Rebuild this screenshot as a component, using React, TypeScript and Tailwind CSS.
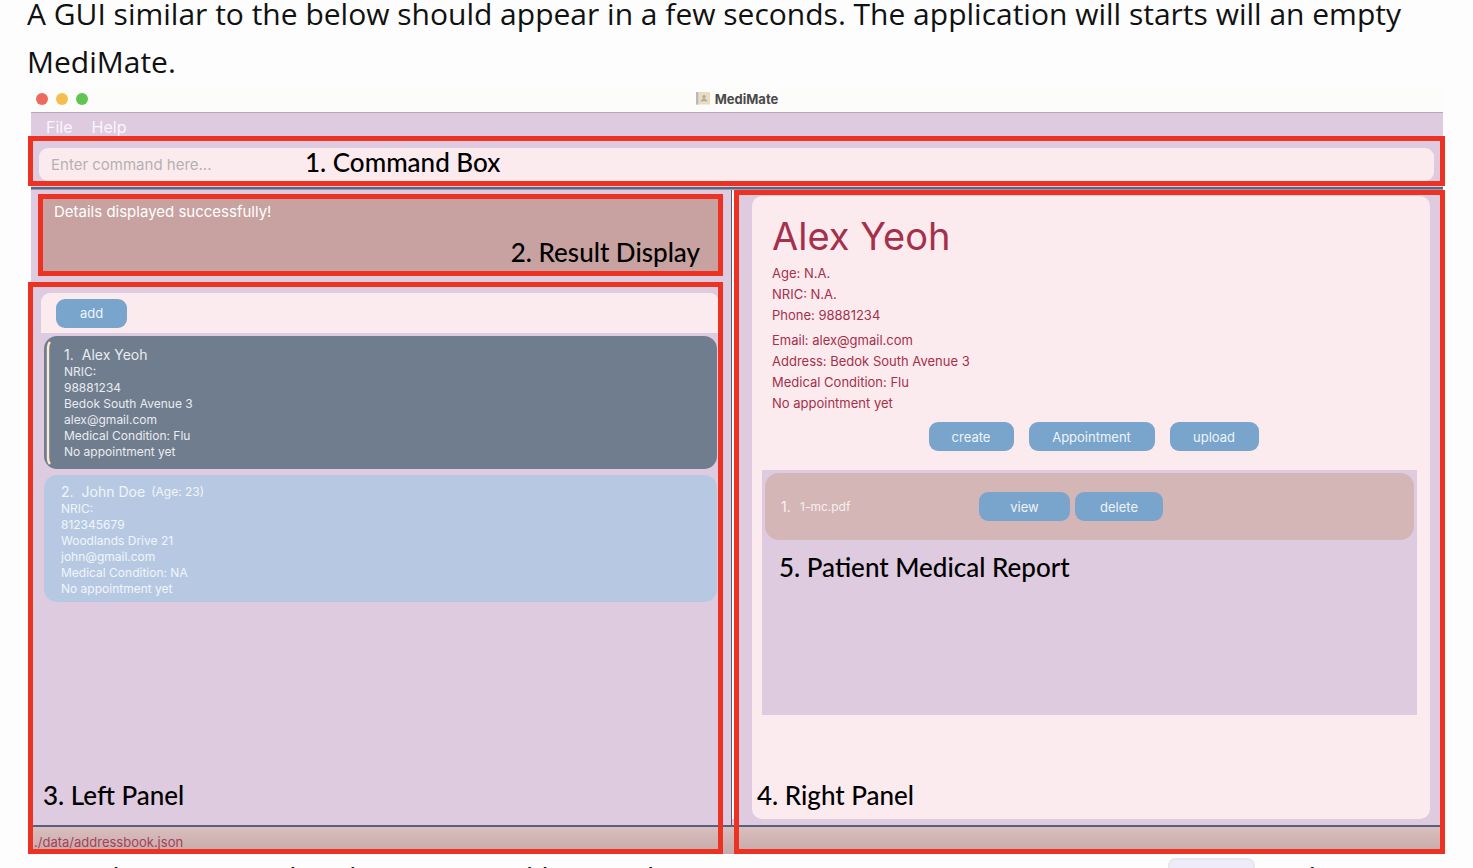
import React from "react";

type Patient = {
  index: number;
  name: string;
  age?: string;
  lines: string[];
  selected?: boolean;
};

const patients: Patient[] = [
  {
    index: 1,
    name: "Alex Yeoh",
    selected: true,
    lines: ["NRIC:", "98881234", "Bedok South Avenue 3", "alex@gmail.com", "Medical Condition: Flu", "No appointment yet"],
  },
  {
    index: 2,
    name: "John Doe",
    age: "(Age: 23)",
    lines: ["NRIC:", "812345679", "Woodlands Drive 21", "john@gmail.com", "Medical Condition: NA", "No appointment yet"],
  },
];

function Label({ children }: { children: React.ReactNode }) {
  return (
    <span className="block font-[Lato,sans-serif] text-[26px] leading-8 font-medium whitespace-nowrap text-black">
      {children}
    </span>
  );
}

function ActionButton({ children, width }: { children: React.ReactNode; width: string }) {
  return (
    <button
      type="button"
      className={`h-[29px] shrink-0 rounded-[9px] bg-[#79a5cc] text-center text-[13px] leading-5 text-[#eef3f8] ${width}`}
    >
      {children}
    </button>
  );
}

function AppIcon() {
  return (
    <svg width="14" height="13" viewBox="0 0 14 13" aria-hidden="true">
      <rect x="0" y="0" width="14" height="12.5" rx="0.6" fill="#e9dcc0" />
      <rect x="0" y="0" width="2.2" height="12.5" fill="#b9b9bb" />
      <rect x="2.2" y="0" width="0.7" height="12.5" fill="#d8d2c4" />
      <circle cx="8" cy="4.6" r="1.7" fill="#b3ab9c" />
      <path d="M7.3 5.5h1.4v1.6l2.5 1v1.2H4.8V8.100l2.500-1z" fill="#b3ab9c" />
    </svg>
  );
}

function PatientCard({ patient }: { patient: Patient }) {
  return (
    <li
      className={
        patient.selected
          ? "relative h-[133px] rounded-[13px] bg-[#707d8f] pt-[10px] pl-5 text-[#e9ecef]"
          : "relative h-[127px] rounded-[13px] bg-[#b7c9e2] pt-2 pl-[17px] text-[#f1f5fa]"
      }
    >
      {patient.selected && (
        <svg className="absolute top-[5px] left-[2px]" width="5" height="124" viewBox="0 0 5 124" aria-hidden="true">
          <path d="M4 1Q2 3 2 8V116Q2 121 4 123" fill="none" stroke="#fbe8cf" strokeWidth="2.4" />
        </svg>
      )}
      <h3 className="flex items-center text-[14px] leading-[18px]">
        <span className="mr-2">{patient.index}.</span>
        <span>{patient.name}</span>
        {patient.age && <span className="ml-[6px] text-[12px]">{patient.age}</span>}
      </h3>
      {patient.lines.map((line) => (
        <p key={line} className="text-[12px] leading-4">
          {line}
        </p>
      ))}
    </li>
  );
}

export default function App() {
  return (
    <main className="h-screen overflow-hidden bg-[#fdfdfd] font-[Inter,sans-serif]">
      <p className="-mt-[10px] px-[27px] pb-px font-['Open_Sans','Noto_Sans',sans-serif] text-[30px] leading-[48px] text-[#111]">
        A GUI similar to the below should appear in a few seconds. The application will starts will an empty
        MediMate.
      </p>

      <section aria-label="MediMate window" className="mr-[30px] ml-[31px] bg-[#decbdf]">
        <header className="flex h-[26px] items-center border-b border-[#b7a6ba] bg-[#fcfcfa] px-[5px] pb-[2px]">
          <div className="flex flex-1 gap-2">
            <span className="size-3 rounded-full bg-[#ec6a5e]" />
            <span className="size-3 rounded-full bg-[#f4bf4f]" />
            <span className="size-3 rounded-full bg-[#61c554]" />
          </div>
          <h1 className="flex items-center gap-[5px] text-[13px] leading-4 font-bold text-[#4a4a4a]">
            <AppIcon />
            MediMate
          </h1>
          <div className="flex-1" />
        </header>

        <nav className="flex h-[23px] gap-[19px] pt-1 pl-[15px] text-[16px] leading-5 text-[#faf6fa]">
          <button type="button">File</button>
          <button type="button">Help</button>
        </nav>

        <div className="relative -mr-[2px] -ml-[3px] border-[5px] border-[#ec3323] bg-[#decbdf] px-[6px] pt-[7px]">
          <input
            aria-label="Command"
            placeholder="Enter command here..."
            className="block h-[33px] w-full rounded-[9px] bg-[#fcebee] px-3 text-[15px] placeholder:text-[#b5b1b3] focus:outline-none"
          />
          <div className="pointer-events-none absolute top-[5px] left-[272px]">
            <Label>1. Command Box</Label>
          </div>
        </div>
        <div className="mt-px h-[3px] border-b border-[#9a97b3] bg-[#5b6480]" />

        <div className="relative">
          <div className="grid grid-cols-[700fr_712fr]">
            <div className="px-[7px] pt-[4px]">
              <div className="mr-[1px] flex h-[82px] justify-between border-[5px] border-[#ec3323] bg-[#c8a2a0] pr-[18px] pl-[11px]">
                <p className="pt-[3px] text-[15px] leading-5 text-white">Details displayed successfully!</p>
                <div className="self-end pb-[3px]">
                  <Label>2. Result Display</Label>
                </div>
              </div>
              <div className="mt-[17px] mr-[5px] ml-[3px] flex h-10 items-center rounded-t-[9px] bg-[#fcebee] pl-[15px]">
                <ActionButton width="w-[71px]">add</ActionButton>
              </div>
              <ul className="mt-[3px] mr-[7px] ml-[6px] flex flex-col gap-[6px]">
                {patients.map((p) => (
                  <PatientCard key={p.index} patient={p} />
                ))}
              </ul>
            </div>

            <div className="border-l border-[#5f5d6b] pr-[13px] pb-[6px]">
              <div className="flex h-full border-l-2 border-white">
                <article className="mt-[6px] ml-[18px] flex-1 rounded-[10px] bg-[#fcebee] pt-5 pr-[13px] pb-[104px] pl-[10px] text-[#a5304b]">
                  <div className="pl-[10px]">
                    <h2 className="text-[38px] leading-[40px]">Alex Yeoh</h2>
                    <div className="mt-[7px] text-[13px] leading-[21px]">
                      <p>Age: N.A.</p>
                      <p>NRIC: N.A.</p>
                      <p className="mb-1">Phone: 98881234</p>
                      <p>Email: alex@gmail.com</p>
                      <p>Address: Bedok South Avenue 3</p>
                      <p>Medical Condition: Flu</p>
                      <p>No appointment yet</p>
                    </div>
                  </div>
                  <div className="mt-2 flex justify-center gap-[15px] pl-2">
                    <ActionButton width="w-[85px]">create</ActionButton>
                    <ActionButton width="w-[126px]">Appointment</ActionButton>
                    <ActionButton width="w-[89px]">upload</ActionButton>
                  </div>
                  <div className="mt-[19px] h-[245px] bg-[#decbdf] p-[3px]">
                    <div className="flex h-[67px] items-center rounded-[14px] bg-[#d5b6b6] pl-4 text-[#f8efef]">
                      <span className="w-[19px] text-[14px]">1.</span>
                      <span className="w-[179px] text-[12px]">1-mc.pdf</span>
                      <div className="flex gap-[5px]">
                        <ActionButton width="w-[91px]">view</ActionButton>
                        <ActionButton width="w-[88px]">delete</ActionButton>
                      </div>
                    </div>
                    <div className="pt-[11px] pl-[14px]">
                      <Label>5. Patient Medical Report</Label>
                    </div>
                  </div>
                </article>
              </div>
            </div>
          </div>

          <footer className="h-[29px] border-t-2 border-[#56607c] bg-linear-to-b from-[#dabebe] to-[#c6aaaa] pt-[5px] pl-[3px] text-[13px] leading-5 text-[#a5405a]">
            ./data/addressbook.json
          </footer>

          <div className="pointer-events-none absolute inset-0 grid grid-cols-[700fr_712fr]">
            <div className="mt-[92px] mr-2 -ml-[3px] flex items-end border-[5px] border-[#ec3323] pb-[38px] pl-[10px]">
              <Label>3. Left Panel</Label>
            </div>
            <div className="-mr-[2px] ml-[3px] flex items-end border-[5px] border-[#ec3323] pb-[38px] pl-[18px]">
              <Label>4. Right Panel</Label>
            </div>
          </div>
        </div>
      </section>

      <p className="px-[27px] font-['Open_Sans','Noto_Sans',sans-serif] text-[30px] leading-[48px] whitespace-nowrap text-[#111]">
        Type the command in the command box and press Enter to execute it. e.g. typing{" "}
        <code className="rounded-lg border-2 border-[#e7e7e7] bg-[#eeecfb] px-2 py-[6px] font-['Liberation_Mono',monospace] text-[28px]">
          help
        </code>{" "}
        and
      </p>
    </main>
  );
}
